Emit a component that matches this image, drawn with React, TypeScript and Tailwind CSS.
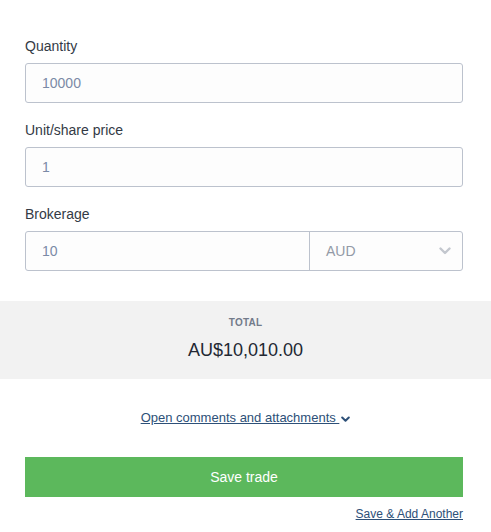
import React from 'react'

const font = { fontFamily: '"Liberation Sans", Arial, sans-serif' }

const Field: React.FC<{ label: string; value: string; className?: string }> = ({ label, value, className }) => (
  <div className={className}>
    <label className="block text-[14px] leading-[20px] text-[#333a45] mb-[7px]">{label}</label>
    <div className="h-[40px] border border-[#bcc2cd] rounded-[3px] bg-[#fdfdfd] flex items-center pl-[16px] text-[14px] text-[#7b8aa6]">
      {value}
    </div>
  </div>
)

const App: React.FC = () => {
  return (
    <div className="w-[491px] h-[532px] bg-white overflow-hidden" style={font}>
      <div className="pt-[36px] pl-[25px] pr-[28px]">
        <Field label="Quantity" value="10000" />
        <Field label="Unit/share price" value="1" className="mt-[17px]" />
        <div className="mt-[17px]">
          <label className="block text-[14px] leading-[20px] text-[#333a45] mb-[7px]">Brokerage</label>
          <div className="h-[40px] border border-[#bcc2cd] rounded-[3px] bg-[#fdfdfd] flex">
            <div className="flex-1 flex items-center pl-[16px] text-[14px] text-[#7b8aa6]">10</div>
            <div className="w-[153px] border-l border-[#bcc2cd] flex items-center justify-between pl-[16px] pr-[11px] text-[14px] text-[#939aa6]">
              <span>AUD</span>
              <svg width="12" height="8" viewBox="0 0 12 8" fill="none">
                <path d="M1.5 1.5 L6 6 L10.5 1.5" stroke="#c3c7ce" strokeWidth="2.4" strokeLinecap="round" strokeLinejoin="round" />
              </svg>
            </div>
          </div>
        </div>
      </div>

      <div className="mt-[30px] h-[78px] bg-[#f2f2f2] flex flex-col items-center pt-[16px]">
        <div className="text-[10px] leading-[12px] font-bold tracking-[0.2px] text-[#737b8a]">TOTAL</div>
        <div className="mt-[10px] text-[18px] leading-[22px] text-[#232833]">AU$10,010.00</div>
      </div>

      <div className="mt-[30px] flex justify-center items-center h-[18px]">
        <a href="#" className="text-[13px] leading-[18px] text-[#2d5078] underline">
          Open comments and attachments&nbsp;
        </a>
        <svg width="9" height="7" viewBox="0 0 9 7" fill="none" className="mt-[2px] ml-[2px]">
          <path d="M1.2 1.5 L4.5 4.8 L7.8 1.5" stroke="#2d5078" strokeWidth="2" strokeLinecap="round" strokeLinejoin="round" />
        </svg>
      </div>

      <div className="mt-[30px] pl-[25px] pr-[28px]">
        <button className="w-full h-[40px] bg-[#5cb85c] text-white text-[14px]">Save trade</button>
        <div className="mt-[9px] flex justify-end">
          <a href="#" className="text-[12px] leading-[16px] text-[#2d5078] underline">Save &amp; Add Another</a>
        </div>
      </div>
    </div>
  )
}

export default App
